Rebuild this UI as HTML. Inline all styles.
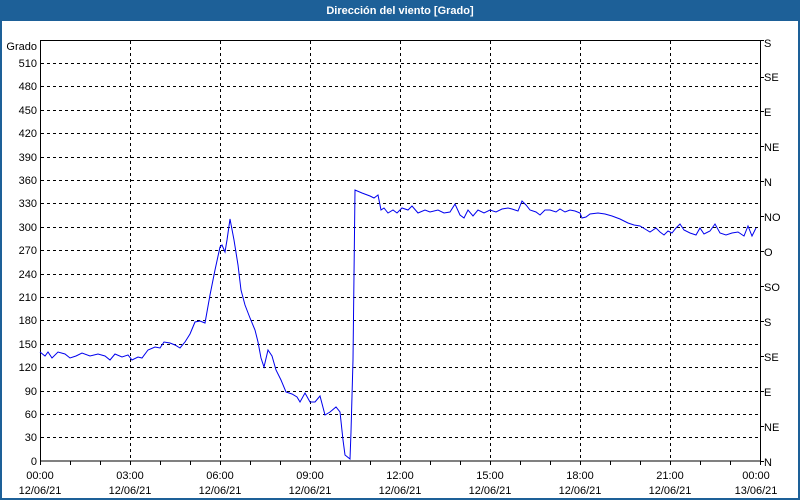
<!DOCTYPE html>
<html><head><meta charset="utf-8"><style>
html,body{margin:0;padding:0;width:800px;height:500px;overflow:hidden;background:#fff}
svg{display:block}
text{font-family:"Liberation Sans","DejaVu Sans",sans-serif;font-size:11px;fill:#000}
</style></head><body>
<svg width="800" height="500" xmlns="http://www.w3.org/2000/svg">
<rect x="0" y="0" width="800" height="500" fill="#1d6098"/>
<rect x="2" y="21" width="796" height="477" fill="#fff"/>
<text x="400" y="14" text-anchor="middle" style="fill:#fff;font-weight:bold;font-size:11px">Dirección del viento [Grado]</text>
<g stroke="#000" stroke-width="1" stroke-dasharray="3,3" shape-rendering="crispEdges">
<line x1="41" y1="63.5" x2="760" y2="63.5"/><line x1="41" y1="86.5" x2="760" y2="86.5"/><line x1="41" y1="110.5" x2="760" y2="110.5"/><line x1="41" y1="133.5" x2="760" y2="133.5"/><line x1="41" y1="157.5" x2="760" y2="157.5"/><line x1="41" y1="180.5" x2="760" y2="180.5"/><line x1="41" y1="203.5" x2="760" y2="203.5"/><line x1="41" y1="227.5" x2="760" y2="227.5"/><line x1="41" y1="250.5" x2="760" y2="250.5"/><line x1="41" y1="274.5" x2="760" y2="274.5"/><line x1="41" y1="297.5" x2="760" y2="297.5"/><line x1="41" y1="320.5" x2="760" y2="320.5"/><line x1="41" y1="344.5" x2="760" y2="344.5"/><line x1="41" y1="367.5" x2="760" y2="367.5"/><line x1="41" y1="391.5" x2="760" y2="391.5"/><line x1="41" y1="414.5" x2="760" y2="414.5"/><line x1="41" y1="437.5" x2="760" y2="437.5"/>
<line x1="130.5" y1="41" x2="130.5" y2="461"/><line x1="220.5" y1="41" x2="220.5" y2="461"/><line x1="310.5" y1="41" x2="310.5" y2="461"/><line x1="400.5" y1="41" x2="400.5" y2="461"/><line x1="490.5" y1="41" x2="490.5" y2="461"/><line x1="580.5" y1="41" x2="580.5" y2="461"/><line x1="670.5" y1="41" x2="670.5" y2="461"/>
</g>
<g stroke="#000" stroke-width="1" shape-rendering="crispEdges" fill="none">
<rect x="40.5" y="40.5" width="720" height="420.5"/>
<path d="M40.5 461v4M70.5 461v4M100.5 461v4M130.5 461v4M160.5 461v4M190.5 461v4M220.5 461v4M250.5 461v4M280.5 461v4M310.5 461v4M340.5 461v4M370.5 461v4M400.5 461v4M430.5 461v4M460.5 461v4M490.5 461v4M520.5 461v4M550.5 461v4M580.5 461v4M610.5 461v4M640.5 461v4M670.5 461v4M700.5 461v4M730.5 461v4M760.5 461v4"/>
<path d="M760 40.5h4M760 77.5h4M760 111.5h4M760 146.5h4M760 181.5h4M760 216.5h4M760 251.5h4M760 286.5h4M760 321.5h4M760 356.5h4M760 391.5h4M760 426.5h4M760 461.5h4"/>
</g>
<g text-anchor="end">
<text x="37" y="50">Grado</text>
<text x="37" y="67">510</text><text x="37" y="90">480</text><text x="37" y="114">450</text><text x="37" y="137">420</text><text x="37" y="161">390</text><text x="37" y="184">360</text><text x="37" y="207">330</text><text x="37" y="231">300</text><text x="37" y="254">270</text><text x="37" y="278">240</text><text x="37" y="301">210</text><text x="37" y="324">180</text><text x="37" y="348">150</text><text x="37" y="371">120</text><text x="37" y="395">90</text><text x="37" y="418">60</text><text x="37" y="441">30</text><text x="37" y="465">0</text>
</g>
<g>
<text x="764" y="47">S</text><text x="764" y="81">SE</text><text x="764" y="116">E</text><text x="764" y="151">NE</text><text x="764" y="186">N</text><text x="764" y="221">NO</text><text x="764" y="256">O</text><text x="764" y="291">SO</text><text x="764" y="326">S</text><text x="764" y="361">SE</text><text x="764" y="396">E</text><text x="764" y="431">NE</text><text x="764" y="466">N</text>
</g>
<g text-anchor="middle">
<text x="40" y="479">00:00</text><text x="40" y="494">12/06/21</text>
<text x="130" y="479">03:00</text><text x="130" y="494">12/06/21</text>
<text x="220" y="479">06:00</text><text x="220" y="494">12/06/21</text>
<text x="310" y="479">09:00</text><text x="310" y="494">12/06/21</text>
<text x="400" y="479">12:00</text><text x="400" y="494">12/06/21</text>
<text x="490" y="479">15:00</text><text x="490" y="494">12/06/21</text>
<text x="580" y="479">18:00</text><text x="580" y="494">12/06/21</text>
<text x="670" y="479">21:00</text><text x="670" y="494">12/06/21</text>
<text x="756" y="479">00:00</text><text x="756" y="494">13/06/21</text>
</g>
<polyline fill="none" stroke="#0000ee" stroke-width="1" points="40,352 45,356 48,352 52,358 58,352 65,354 70,358 76,356 82,353 90,356 98,354 105,356 110,360 115,354 122,357 128,355 132,360 138,357 142,358 148,350 155,347 160,348 164,342 170,343 175,345 180,348 185,342 190,334 195,322 200,321 205,323 210,295 215,270 220,247 222,245 225,252 227,240 230,219 234,240 238,265 241,290 245,305 250,318 255,330 258,342 261,358 264,367 268,350 272,356 276,370 281,380 286,392 292,394 297,397 300,402 305,393 310,402 315,402 320,396 325,415 330,412 336,407 340,412 343,440 345,455 350,459 351,432 353,360 355,190 362,193 370,196 374,198 378,195 381,210 384,208 388,213 393,210 397,213 402,208 408,210 412,206 418,213 425,210 430,212 438,210 444,213 450,212 455,204 460,215 464,218 468,210 473,216 478,210 484,213 490,210 496,212 502,209 508,208 512,209 518,211 522,201 526,205 530,210 536,212 540,215 545,210 550,210 556,212 560,209 565,212 570,210 575,211 580,213 582,218 586,217 590,214 598,213 605,214 612,216 620,219 628,223 634,225 640,226 645,229 650,232 656,228 660,232 664,235 668,231 672,233 676,228 680,224 684,230 690,233 696,235 700,228 704,234 710,231 715,224 720,233 726,235 732,233 738,232 744,236 748,226 752,236 756,228"/>
</svg>
</body></html>
